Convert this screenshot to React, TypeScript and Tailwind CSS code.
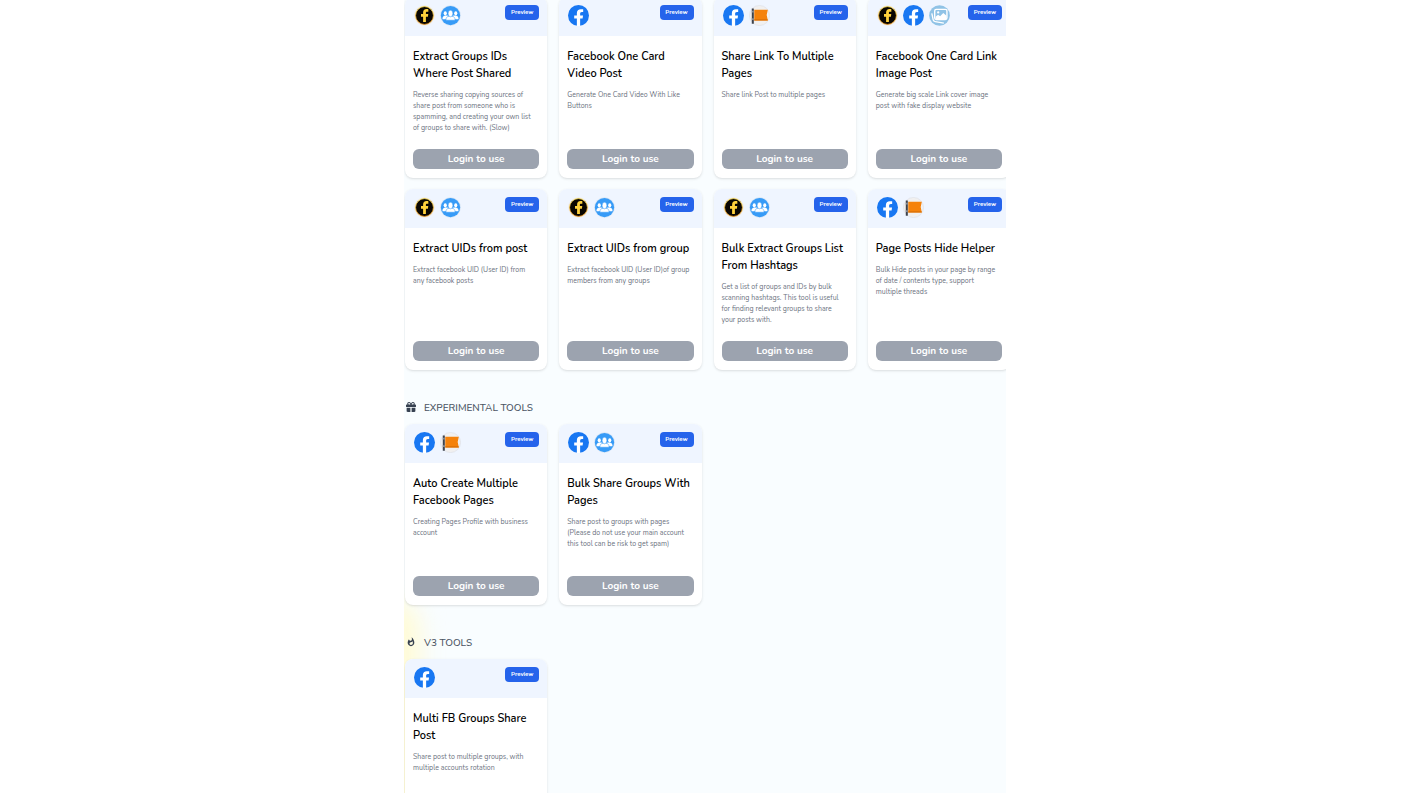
import React from "react";
import { FaGift } from "react-icons/fa6";
import { MdWhatshot } from "react-icons/md";

type Badge = "token" | "facebook" | "groups" | "pages" | "image";

type Tool = {
  title: string;
  text: string;
  badges: Badge[];
};

const tools: Tool[] = [
  {
    title: "Extract Groups IDs Where Post Shared",
    text: "Reverse sharing copying sources of share post from someone who is spamming, and creating your own list of groups to share with. (Slow)",
    badges: ["token", "groups"],
  },
  {
    title: "Facebook One Card Video Post",
    text: "Generate One Card Video With Like Buttons",
    badges: ["facebook"],
  },
  {
    title: "Share Link To Multiple Pages",
    text: "Share link Post to multiple pages",
    badges: ["facebook", "pages"],
  },
  {
    title: "Facebook One Card Link Image Post",
    text: "Generate big scale Link cover image post with fake display website",
    badges: ["token", "facebook", "image"],
  },
  {
    title: "Extract UIDs from post",
    text: "Extract facebook UID (User ID) from any facebook posts",
    badges: ["token", "groups"],
  },
  {
    title: "Extract UIDs from group",
    text: "Extract facebook UID (User ID)of group members from any groups",
    badges: ["token", "groups"],
  },
  {
    title: "Bulk Extract Groups List From Hashtags",
    text: "Get a list of groups and IDs by bulk scanning hashtags. This tool is useful for finding relevant groups to share your posts with.",
    badges: ["token", "groups"],
  },
  {
    title: "Page Posts Hide Helper",
    text: "Bulk Hide posts in your page by range of date / contents type, support multiple threads",
    badges: ["facebook", "pages"],
  },
];

const experimentalTools: Tool[] = [
  {
    title: "Auto Create Multiple Facebook Pages",
    text: "Creating Pages Profile with business account",
    badges: ["facebook", "pages"],
  },
  {
    title: "Bulk Share Groups With Pages",
    text: "Share post to groups with pages (Please do not use your main account this tool can be risk to get spam)",
    badges: ["facebook", "groups"],
  },
];

const v3Tools: Tool[] = [
  {
    title: "Multi FB Groups Share Post",
    text: "Share post to multiple groups, with multiple accounts rotation",
    badges: ["facebook"],
  },
];

const fPath =
  "M16.671 15.543l.532-3.47h-3.328v-2.25c0-.949.465-1.874 1.956-1.874h1.513V4.996s-1.374-.235-2.686-.235c-2.741 0-4.533 1.662-4.533 4.669v2.642H7.078v3.47h3.047v8.385a12.09 12.09 0 003.75 0v-8.385h2.796z";

function BadgeIcon({ name }: { name: Badge }) {
  return (
    <svg viewBox="0 0 24 24" className="size-[21px] shrink-0" aria-hidden="true">
      {name === "facebook" && (
        <>
          <circle cx="12" cy="12" r="12" fill="#1877f2" />
          <path d={fPath} fill="#fff" />
        </>
      )}
      {name === "token" && (
        <>
          <defs>
            <linearGradient id="gold" x1="0" y1="0" x2="0" y2="1">
              <stop offset="0" stopColor="#ffe14d" />
              <stop offset="1" stopColor="#f59a1b" />
            </linearGradient>
          </defs>
          <circle cx="12" cy="12" r="11.8" fill="#f1ece4" />
          <circle cx="12" cy="12" r="10.2" fill="#0a0702" stroke="url(#gold)" strokeWidth="0.9" />
          <path
            d="M16.4 4.8v2.9h-1.5c-1 0-1.3.4-1.3 1.2v1.5h2.7l-.4 2.9h-2.3v6h-3.2v-6H8v-2.9h2.400V8.600c0-2.500 1.400-3.900 3.800-3.900.9 0 1.700.05 2.200.1z"
            fill="#ffd23c"
          />
        </>
      )}
      {name === "groups" && (
        <>
          <circle cx="12" cy="12" r="11.8" fill="#d5e4f5" />
          <circle cx="12" cy="12" r="11" fill="#379bf7" />
          <g fill="#fff">
            <ellipse cx="6" cy="9.5" rx="1.8" ry="2.4" />
            <ellipse cx="18" cy="9.5" rx="1.8" ry="2.4" />
            <path d="M2.8 16.2c0-2.600.7-3.700 3.200-4.200h3v4.200zM21.200 16.200c0-2.600-.7-3.700-3.200-4.200h-3v4.200z" />
          </g>
          <g fill="#fff" stroke="#379bf7" strokeWidth="0.6">
            <path d="M6.800 17.400c0-3 .9-4 3.700-4.700h3c2.800.7 3.700 1.700 3.700 4.700z" />
            <ellipse cx="12" cy="9.700" rx="2.700" ry="3.800" />
          </g>
        </>
      )}
      {name === "pages" && (
        <>
          <circle cx="12" cy="12" r="11.5" fill="#f1f0f0" stroke="#e0e1e6" strokeWidth="0.8" />
          <path d="M6 5.500h15.500l-1.300 6 1.300 6.200H6z" fill="#f5820b" />
          <path d="M6 16.300h15.200l.3 1.400H6z" fill="#d96f07" />
          <path d="M3.200 4h2.300v17.500H3.200z" fill="#3e434c" />
          <path d="M3.200 6.500h2.300v2H3.200zM3.200 15h2.300v2H3.200z" fill="#8b9099" />
        </>
      )}
      {name === "image" && (
        <>
          <circle cx="12" cy="12" r="11.8" fill="#90c3e6" />
          <path d="M3.200 9.500l1.600 7.500c.3 1.300 1 1.800 2.300 2l9.900 1.800" fill="none" stroke="#fff" strokeWidth="1.500" />
          <rect x="6.500" y="5" width="14" height="11.500" rx="1.800" fill="#90c3e6" stroke="#fff" strokeWidth="1.600" />
          <circle cx="10.500" cy="8.500" r="1.300" fill="#fff" />
          <path d="M7.500 16v-2.500l2.900-2.300 2.300 1.600 3.600-3.800 3.700 3.300V16z" fill="#fff" />
        </>
      )}
    </svg>
  );
}

function ToolCard({ tool }: { tool: Tool }) {
  return (
    <article className="flex min-h-[181px] flex-col overflow-hidden rounded-lg bg-white shadow">
      <div className="flex h-[39px] items-start justify-between bg-[#eff5ff] px-2 pt-2">
        <div className="flex gap-[5px] pl-px">
          {tool.badges.map((badge) => (
            <BadgeIcon key={badge} name={badge} />
          ))}
        </div>
        <button
          type="button"
          className="h-[15px] w-[34px] rounded bg-[#2563eb] text-[6px] leading-[15px] font-bold text-white">
          Preview
        </button>
      </div>
      <div className="flex grow flex-col px-2 pt-3 pb-[9px]">
        <h3 className="text-[11px] leading-[17px] font-semibold text-black">{tool.title}</h3>
        <p className="mt-[7px] mb-2 pr-1 text-[7px] leading-[11px] text-[#6b7280]">{tool.text}</p>
        <button
          type="button"
          className="mt-auto h-5 w-full rounded-md bg-[#9ca3af] text-[10px] leading-5 font-bold text-white">
          Login to use
        </button>
      </div>
    </article>
  );
}

function ToolGrid({ items }: { items: Tool[] }) {
  return (
    <div className="-mr-1 grid grid-cols-4 gap-x-3 gap-y-[11px]">
      {items.map((tool) => (
        <ToolCard key={tool.title} tool={tool} />
      ))}
    </div>
  );
}

function SectionTitle({ icon, children }: { icon: React.ReactNode; children: React.ReactNode }) {
  return (
    <h2 className="flex items-center gap-2 pt-[30px] pb-2 pl-px text-[10px] leading-4 font-medium text-[#4b5563]">
      <span className="pb-0.5 text-[#374151]">{icon}</span>
      {children}
    </h2>
  );
}

export default function App() {
  return (
    <div className="h-screen overflow-y-auto bg-white font-['Nunito','Lato',sans-serif] [scrollbar-width:none]">
      <main className="relative isolate mx-auto min-h-full w-full max-w-[602px] overflow-hidden bg-[#f9fdff] pb-8 pl-px">
        {/* glow */}
        <div className="absolute top-[600px] -left-10 -z-10 h-64 w-14 rounded-full bg-[#fffbd6] blur-md" />

        <section className="-mt-[3px]">
          <ToolGrid items={tools} />
        </section>
        <section>
          <SectionTitle icon={<FaGift className="size-[10px]" />}>EXPERIMENTAL TOOLS</SectionTitle>
          <ToolGrid items={experimentalTools} />
        </section>
        <section>
          <SectionTitle icon={<MdWhatshot className="size-[10px]" />}>V3 TOOLS</SectionTitle>
          <ToolGrid items={v3Tools} />
        </section>
      </main>
    </div>
  );
}
